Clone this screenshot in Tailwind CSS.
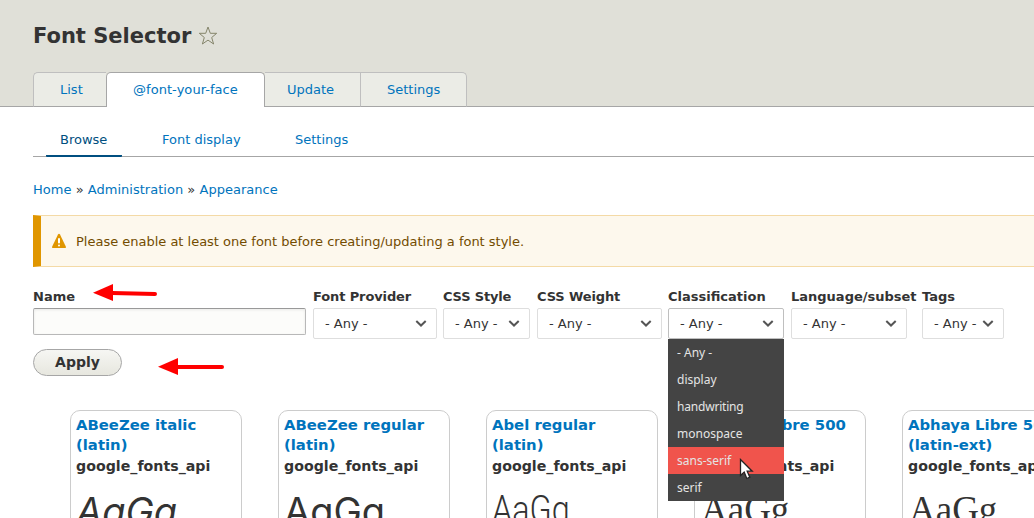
<!DOCTYPE html>
<html lang="en">
<head>
<meta charset="utf-8">
<title>Font Selector</title>
<script src="https://cdn.jsdelivr.net/npm/@tailwindcss/browser@4"></script>
</head>
<body class="relative h-[518px] w-[1034px] overflow-hidden bg-white font-['DejaVu_Sans',sans-serif] text-[13px] leading-5 text-[#333]">
<header class="flex h-[107px] flex-col justify-between border-b border-[#a6a6a6] bg-[#e0e0d8] pl-[33px]">
  <div class="flex items-center pt-[23px]">
    <h1 class="text-[21px] leading-[26px] font-bold whitespace-nowrap">Font Selector</h1>
    <svg class="ml-[7px] size-5" viewBox="0 0 20 20" fill="none" stroke="#85856b" stroke-linejoin="round"><path d="M10 1l2.300 6.300h6.400l-5 4.200 1.900 6.500-5.600-3.900-5.600 3.900 1.900-6.500-5-4.200h6.400z"/></svg>
  </div>
  <nav class="-mb-px flex h-[35px] text-[#0074bd]">
    <a class="w-[73px] rounded-tl-[5px] border-t border-b border-l border-[#bfbfbf] border-b-[#a6a6a6] bg-[#ebece6] pt-[7px] pl-[26px]">List</a>
    <a class="w-[159px] rounded-t-[5px] border border-b-0 border-[#a6a6a6] bg-white pt-[7px] pl-[26px] tracking-[0.05px]">@font-your-face</a>
    <a class="w-[96px] border-t border-r border-b border-[#bfbfbf] border-b-[#a6a6a6] bg-[#ebece6] pt-[7px] pl-[22px]">Update</a>
    <a class="w-[106px] rounded-tr-[5px] border-t border-r border-b border-[#bfbfbf] border-b-[#a6a6a6] bg-[#ebece6] pt-[7px] pl-[26px]">Settings</a>
  </nav>
</header>
<main class="pl-[33px]">
  <nav class="flex h-[50px] border-b border-[#a6a6a6] pt-[23px] pl-[13px] text-[#0074bd]">
    <a class="h-[27px] w-[76px] rounded-[1px] border-b-2 border-[#004f80] pl-[14px] text-[#004f80]">Browse</a>
    <a class="ml-[40px] w-[79px] whitespace-nowrap">Font display</a>
    <a class="ml-[54px]">Settings</a>
  </nav>
  <div class="mt-[23px] tracking-[0.02px] whitespace-nowrap text-[#0074bd]">Home <span class="text-[#333]">»</span> Administration <span class="text-[#333]">»</span> Appearance</div>
  <div class="mt-[15px] flex h-[52px] items-center border-y border-l-8 border-[#f4daa6] border-l-[#e09600] bg-[#fdf8ed] pl-[10px] text-[#734c00]">
    <svg class="mr-[9px] h-4 w-4" viewBox="0 0 16 16"><path fill="#e09600" d="M7 1.400c.5-.9 1.500-.9 2 0l5.800 12c.4.9 0 1.600-.9 1.600H2.100c-.9 0-1.300-.7-.9-1.600z"/><path stroke="#fff" stroke-width="2" stroke-linecap="round" d="M8 6v3.400M8 12.400v.1"/></svg>
    <span class="pt-[2px] tracking-[-0.01px] whitespace-nowrap">Please enable at least one font before creating/updating a font style.</span>
  </div>
  <form class="mt-[20px] flex h-[52px] whitespace-nowrap">
    <div class="w-[280px]"><label class="block font-bold">Name</label><div class="mt-px h-[27px] w-[273px] rounded-[2px] border border-[#b8b8b8] border-t-[#999] bg-[#fcfcfa] shadow-[inset_0_1px_3px_rgba(0,0,0,0.08)]"></div></div>
    <div class="w-[130px]"><label class="block font-bold tracking-[-0.12px]">Font Provider</label><div class="mt-px flex h-[31px] w-[124px] items-center justify-between rounded-[2px] border border-[#dedede] pr-[9px] pl-[11px]">- Any -<svg class="size-3" viewBox="0 0 12 12" fill="none" stroke="#555" stroke-width="2"><path d="M1.300 3L6 7.500l4.700-4.500"/></svg></div></div>
    <div class="w-[94px]"><label class="block font-bold tracking-[-0.18px]">CSS Style</label><div class="mt-px flex h-[31px] w-[87px] items-center justify-between rounded-[2px] border border-[#dedede] pr-[9px] pl-[11px]">- Any -<svg class="size-3" viewBox="0 0 12 12" fill="none" stroke="#555" stroke-width="2"><path d="M1.300 3L6 7.500l4.700-4.500"/></svg></div></div>
    <div class="w-[131px]"><label class="block font-bold tracking-[-0.12px]">CSS Weight</label><div class="mt-px flex h-[31px] w-[125px] items-center justify-between rounded-[2px] border border-[#dedede] pr-[9px] pl-[11px]">- Any -<svg class="size-3" viewBox="0 0 12 12" fill="none" stroke="#555" stroke-width="2"><path d="M1.300 3L6 7.500l4.700-4.500"/></svg></div></div>
    <div class="w-[123px]"><label class="block font-bold">Classification</label><div class="mt-px flex h-[31px] w-[116px] items-center justify-between rounded-[2px] border border-[#bfbfbf] pr-[9px] pl-[11px]">- Any -<svg class="size-3" viewBox="0 0 12 12" fill="none" stroke="#555" stroke-width="2"><path d="M1.300 3L6 7.500l4.700-4.500"/></svg></div></div>
    <div class="w-[131px]"><label class="block font-bold">Language/subset</label><div class="mt-px flex h-[31px] w-[116px] items-center justify-between rounded-[2px] border border-[#dedede] pr-[9px] pl-[11px]">- Any -<svg class="size-3" viewBox="0 0 12 12" fill="none" stroke="#555" stroke-width="2"><path d="M1.300 3L6 7.500l4.700-4.500"/></svg></div></div>
    <div class="w-[82px]"><label class="block font-bold">Tags</label><div class="mt-px flex h-[31px] w-[82px] items-center justify-between rounded-[2px] border border-[#dedede] pr-[9px] pl-[11px]">- Any -<svg class="size-3" viewBox="0 0 12 12" fill="none" stroke="#555" stroke-width="2"><path d="M1.300 3L6 7.500l4.700-4.500"/></svg></div></div>
  </form>
  <button class="mt-[10px] block h-[27px] w-[89px] rounded-full border border-[#a6a6a6] bg-linear-to-b from-[#f6f6f3] to-[#e7e7df] pb-px text-[14px] leading-[24px] font-bold">Apply</button>
  <section class="mt-[34px] ml-[37px] flex h-[108px] gap-[36px] overflow-hidden text-[14.2px]">
    <article class="h-[140px] w-[172px] shrink-0 rounded-[10px] border border-[#ccc] pt-[4px] pl-[5px] font-bold whitespace-nowrap"><h3 class="text-[14.85px] text-[#0074bd]">ABeeZee italic<br>(latin)</h3><p class="mt-px">google_fonts_api</p><p class="mt-[11px] w-max origin-left font-['Inter',sans-serif] text-[38px] leading-[48px] font-normal italic [font-feature-settings:'cv11']">AaGg</p></article>
    <article class="h-[140px] w-[172px] shrink-0 rounded-[10px] border border-[#ccc] pt-[4px] pl-[5px] font-bold whitespace-nowrap"><h3 class="text-[14.85px] text-[#0074bd]">ABeeZee regular<br>(latin)</h3><p class="mt-px">google_fonts_api</p><p class="mt-[11px] w-max origin-left font-['Inter',sans-serif] text-[38px] leading-[48px] font-normal [font-feature-settings:'cv11']">AaGg</p></article>
    <article class="h-[140px] w-[172px] shrink-0 rounded-[10px] border border-[#ccc] pt-[4px] pl-[5px] font-bold whitespace-nowrap"><h3 class="text-[14.85px] text-[#0074bd]">Abel regular<br>(latin)</h3><p class="mt-px">google_fonts_api</p><p class="mt-[10px] w-max origin-left scale-x-[0.83] font-['Roboto',sans-serif] text-[39px] leading-[48px] font-light">AaGg</p></article>
    <article class="h-[140px] w-[172px] shrink-0 rounded-[10px] border border-[#ccc] pt-[4px] pl-[5px] font-bold whitespace-nowrap"><h3 class="text-[14.85px] text-[#0074bd]">Abhaya Libre 500<br>(latin)</h3><p class="mt-px">google_fonts_api</p><p class="mt-[10px] w-max origin-left pl-px font-['Liberation_Serif',serif] text-[37px] leading-[48px] font-normal">AaGg</p></article>
    <article class="h-[140px] w-[172px] shrink-0 rounded-[10px] border border-[#ccc] pt-[4px] pl-[5px] font-bold whitespace-nowrap"><h3 class="text-[14.85px] text-[#0074bd]">Abhaya Libre 500<br>(latin-ext)</h3><p class="mt-px">google_fonts_api</p><p class="mt-[10px] w-max origin-left pl-px font-['Liberation_Serif',serif] text-[37px] leading-[48px] font-normal">AaGg</p></article>
  </section>
</main>
<ul class="absolute top-[339px] left-[668px] w-[116px] bg-[#444] font-['Noto_Sans',sans-serif] text-[12px] leading-[27px] text-[#e4e4e4]">
  <li class="h-[27px] pl-[9px]">- Any -</li><li class="h-[27px] pl-[9px]">display</li><li class="h-[27px] pl-[9px] tracking-[-0.2px]">handwriting</li><li class="h-[27px] pl-[9px]">monospace</li><li class="h-[27px] bg-[#f0544c] pl-[9px]">sans-serif</li><li class="h-[27px] pl-[9px]">serif</li>
</ul>
<svg class="absolute top-[458px] left-[738px] h-[24px] w-[16px]" viewBox="0 0 16 24"><path d="M2.500 1.500v16l3.700-3.300 2.600 6.300 3-1.300-2.600-6h5z" fill="#fff" stroke="#222" stroke-width="1.300"/></svg>
<svg class="absolute top-[283px] left-[92px] h-[20px] w-[68px]" viewBox="0 0 68 20"><path d="M1 9.800L21 1v17z" fill="#f00"/><path d="M20 10l43 1" stroke="#f00" stroke-width="4" stroke-linecap="round"/></svg>
<svg class="absolute top-[357px] left-[157px] h-[20px] w-[68px]" viewBox="0 0 68 20"><path d="M1 9.800L21 1v17z" fill="#f00"/><path d="M20 10h45" stroke="#f00" stroke-width="4" stroke-linecap="round"/></svg>
</body>
</html>
